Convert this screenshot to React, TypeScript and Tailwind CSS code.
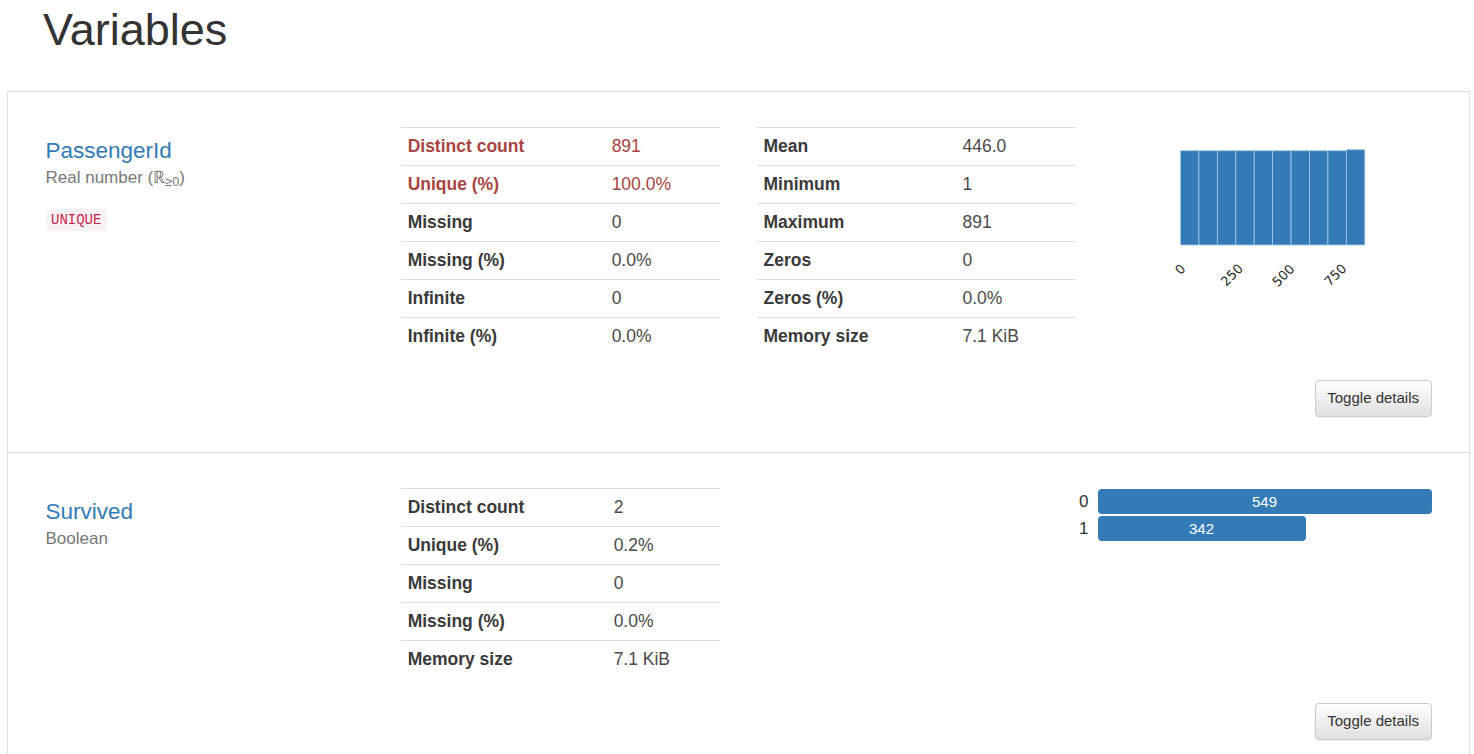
import type { ReactNode } from "react";

type Row = { label: string; value: string; alert?: boolean };

const passengerLeft: Row[] = [
  { label: "Distinct count", value: "891", alert: true },
  { label: "Unique (%)", value: "100.0%", alert: true },
  { label: "Missing", value: "0" },
  { label: "Missing (%)", value: "0.0%" },
  { label: "Infinite", value: "0" },
  { label: "Infinite (%)", value: "0.0%" },
];

const passengerRight: Row[] = [
  { label: "Mean", value: "446.0" },
  { label: "Minimum", value: "1" },
  { label: "Maximum", value: "891" },
  { label: "Zeros", value: "0" },
  { label: "Zeros (%)", value: "0.0%" },
  { label: "Memory size", value: "7.1 KiB" },
];

const survivedRows: Row[] = [
  { label: "Distinct count", value: "2" },
  { label: "Unique (%)", value: "0.2%" },
  { label: "Missing", value: "0" },
  { label: "Missing (%)", value: "0.0%" },
  { label: "Memory size", value: "7.1 KiB" },
];

function StatTable({ rows, labelWidth }: { rows: Row[]; labelWidth: string }) {
  return (
    <table className="mb-[25px] w-full border-collapse">
      <tbody>
        {rows.map((r) => (
          <tr key={r.label} className={r.alert ? "text-[#a94442]" : "text-[#3a3a3a]"}>
            <th
              className={`${labelWidth} border-t border-[#ddd] px-[6.25px] py-[6px] text-left font-bold leading-[25px]`}
            >
              {r.label}
            </th>
            <td
              className={`border-t border-[#ddd] px-[6.25px] py-[6px] leading-[25px] ${
                r.alert ? "" : "text-[#4a4a4a]"
              }`}
            >
              {r.value}
            </td>
          </tr>
        ))}
      </tbody>
    </table>
  );
}

function VarName({ name, kind, children }: { name: string; kind: ReactNode; children?: ReactNode }) {
  return (
    <div className="px-[18.75px] pt-[11.5px]">
      <p className="text-[22.5px] leading-[1.1] text-[#337ab7]">{name}</p>
      <p className="mt-[2.5px] text-[17px] leading-[24.3px] text-[#777]">{kind}</p>
      {children}
    </div>
  );
}

function ToggleButton() {
  return (
    <div className="flex justify-end px-[37.5px]">
      <button className="h-[37px] rounded-[4px] border border-[#ccc] bg-linear-to-b from-white to-[#e0e0e0] px-[11.5px] text-[15px] leading-[22.5px] text-[#333] shadow-[0_1px_1px_rgba(0,0,0,0.075)]">
        Toggle details
      </button>
    </div>
  );
}

function Histogram() {
  const x0 = 67.5;
  const bw = 18.43;
  const bottom = 118;
  const bars = Array.from({ length: 10 }, (_, i) => ({
    x: x0 + i * bw,
    top: i === 9 ? 22.7 : 23.7,
  }));
  const ticks = [
    { t: "0", x: 67.3, y: 142.5 },
    { t: "250", x: 118.8, y: 148 },
    { t: "500", x: 170.3, y: 148.5 },
    { t: "750", x: 222.3, y: 148 },
  ];
  return (
    <svg width="319" height="175" viewBox="0 0 319 175" className="block">
      {bars.map((b, i) => (
        <rect
          key={i}
          x={b.x}
          y={b.top}
          width={bw}
          height={bottom - b.top}
          fill="#337ab7"
          stroke="#a9c7e5"
          strokeWidth={0.8}
        />
      ))}
      {ticks.map((k) => (
        <text
          key={k.t}
          x={k.x}
          y={k.y}
          textAnchor="middle"
          dominantBaseline="central"
          transform={`rotate(-45 ${k.x} ${k.y})`}
          fontSize={13}
          fill="#262626"
          fontFamily="'DejaVu Sans', sans-serif"
        >
          {k.t}
        </text>
      ))}
    </svg>
  );
}

function BoolBars() {
  const data = [
    { k: "0", n: 549 },
    { k: "1", n: 342 },
  ];
  const max = 549;
  return (
    <div className="col-span-2 flex flex-col items-end gap-[2px] px-[18.75px] pt-[1px]">
      {data.map((d) => (
        <div key={d.k} className="flex items-center">
          <span className="w-[36px] pr-[9px] text-right text-[17px] leading-[25px] text-[#333]">{d.k}</span>
          <div className="h-[25px] w-[334px]">
            <div
              className="h-full rounded-[4px] bg-[#337ab7] text-center text-[15px] leading-[25px] text-white"
              style={{ width: `${(d.n / max) * 100}%` }}
            >
              {d.n}
            </div>
          </div>
        </div>
      ))}
    </div>
  );
}

export default function App() {
  return (
    <div className="min-h-screen bg-white font-['Liberation_Sans',Arial,sans-serif] text-[17.5px] text-[#333]">
      <h1 className="pl-[43px] pt-[5px] text-[45px] leading-[1.1] font-normal text-[#333]">Variables</h1>

      <div className="mt-[36.5px] ml-[7px] w-[1463px] border border-[#e0e0e0]">
        <section className="pt-[35px] pb-[35px]">
          <div className="grid grid-cols-4 px-[18.75px]">
            <VarName
              name="PassengerId"
              kind={
                <>
                  Real number (ℝ<sub>≥0</sub>)
                </>
              }
            >
              <div className="mt-[19px] flex">
                <code className="inline-block rounded-[4px] bg-[#f9f2f4] px-[5.5px] py-[2.5px] font-['Liberation_Mono',monospace] text-[14px] leading-[17px] text-[#c7254e]">
                  UNIQUE
                </code>
              </div>
            </VarName>
            <div className="px-[18.75px]">
              <StatTable rows={passengerLeft} labelWidth="w-[204px]" />
            </div>
            <div className="px-[18.75px]">
              <StatTable rows={passengerRight} labelWidth="w-[199px]" />
            </div>
            <div className="px-[18.75px]">
              <Histogram />
            </div>
          </div>
          <ToggleButton />
        </section>

        <section className="border-t border-[#e0e0e0] pt-[35px] pb-[35px]">
          <div className="grid grid-cols-4 px-[18.75px]">
            <VarName name="Survived" kind="Boolean" />
            <div className="px-[18.75px]">
              <StatTable rows={survivedRows} labelWidth="w-[206px]" />
            </div>
            <BoolBars />
          </div>
          <ToggleButton />
        </section>
      </div>
    </div>
  );
}
